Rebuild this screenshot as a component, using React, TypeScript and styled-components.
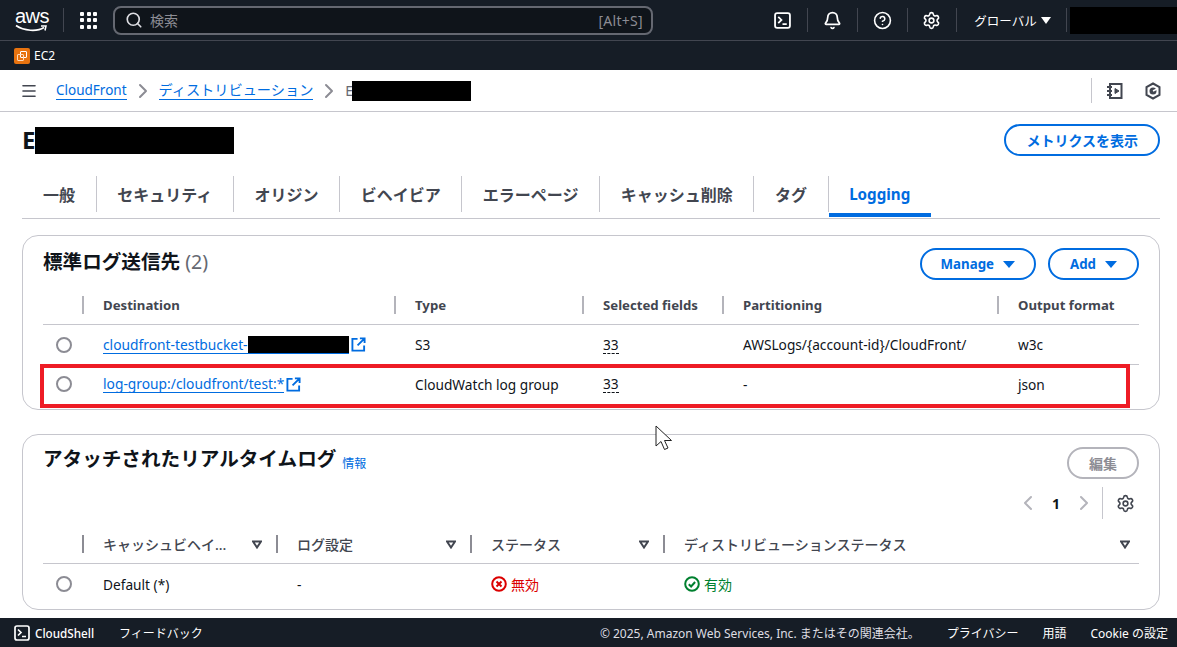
import React from 'react';
import styled, { createGlobalStyle } from 'styled-components';
import { Bell, ChevronLeft, ChevronRight, CircleHelp, Menu, Search, Settings } from 'lucide-react';

const GlobalStyle = createGlobalStyle`
    html, body {
        margin: 0;
        padding: 0;
        height: 647px;
        overflow: hidden;
        background: #fff;
        font-family: "Noto Sans", "Noto Sans CJK JP", sans-serif;
        font-size: 14px;
        color: #0f141a;
    }
    * { box-sizing: border-box; }
`;

const Page = styled.div`
    position: relative;
    width: 1177px;
    height: 647px;
    display: flex;
    flex-direction: column;
    overflow: hidden;
`;

const TopNav = styled.header`
    height: 41px;
    background: #161d26;
    border-bottom: 1px solid #424650;
    display: flex;
    align-items: center;
    padding-left: 15px;
    color: #fff;
    flex: none;
    overflow: hidden;
`;

const Logo = styled.div`
    width: 33px;
    height: 24px;
    margin-right: 15px;
    flex: none;
    font-family: "Liberation Sans", sans-serif;
    font-size: 20px;
    line-height: 17px;
    letter-spacing: -0.5px;
    text-align: center;
    svg { display: block; margin-top: -1px; }
`;

const NavDivider = styled.span`
    width: 1px;
    height: 24px;
    background: #424650;
    flex: none;
`;

const GridIcon = styled.div`
    width: 17px;
    height: 17px;
    margin: 0 16px 0 16px;
    flex: none;
    display: grid;
    grid-template-columns: repeat(3, 4px);
    grid-template-rows: repeat(3, 4px);
    gap: 2.5px;
    i { background: #fff; border-radius: 1px; }
`;

const SearchBox = styled.div`
    width: 540px;
    height: 29px;
    flex: none;
    border: 2px solid #656871;
    border-radius: 8px;
    background: #0f141a;
    display: flex;
    align-items: center;
    padding: 0 8px 0 10px;
    color: #8c8c94;
    font-size: 14px;
    span:first-of-type { margin-left: 7px; flex: 1; }
    span:last-of-type { letter-spacing: 0.3px; }
`;

const NavIconSlot = styled.div`
    width: 48.7px;
    height: 24px;
    display: flex;
    align-items: center;
    justify-content: center;
    flex: none;
`;

const NavIcons = styled.div`
    display: flex;
    align-items: center;
    margin-left: 105.500px;
    flex: none;
`;

const Region = styled.div`
    width: 109px;
    display: flex;
    align-items: center;
    padding-left: 17px;
    font-size: 12.5px;
    gap: 4px;
`;

const Caret = styled.span<{ $w?: number; $c?: string }>`
    width: 0;
    height: 0;
    border-left: ${p => (p.$w || 10) / 2}px solid transparent;
    border-right: ${p => (p.$w || 10) / 2}px solid transparent;
    border-top: 7px solid ${p => p.$c || '#fff'};
`;

const Redact = styled.span<{ $w: number; $h: number }>`
    display: inline-block;
    width: ${p => p.$w}px;
    height: ${p => p.$h}px;
    background: #000;
    flex: none;
`;

const AccountRedact = styled(Redact)`
    margin-left: 3px;
    margin-top: 1px;
`;

const ServiceBar = styled.div`
    height: 29px;
    background: #161d26;
    display: flex;
    align-items: center;
    padding-left: 14px;
    gap: 4px;
    font-size: 12px;
    color: #fff;
    flex: none;
`;

const Breadcrumbs = styled.nav`
    height: 42px;
    border-bottom: 1px solid #c6c6cd;
    display: flex;
    align-items: center;
    padding: 0 15px 0 20px;
    font-size: 14px;
    color: #656871;
    flex: none;
`;

const MenuSlot = styled.span`
    display: flex;
    margin-right: 18px;
    color: #424650;
`;

const Crumb = styled.a<{ $size: number }>`
    color: #006ce0;
    border-bottom: 1px solid #006ce0;
    font-size: ${p => p.$size}px;
    line-height: 18px;
`;

const CrumbSep = styled.span`
    display: flex;
    width: 32px;
    justify-content: center;
    color: #8c8c94;
`;

const CrumbTail = styled.span`
    display: flex;
    align-items: center;
    flex: 1;
`;

const CrumbId = styled(Redact)`
    margin-left: -1px;
`;

const ToolIcons = styled.div`
    display: flex;
    align-items: center;
    height: 25px;
    margin-left: 1px;
    border-left: 1px solid #c6c6cd;
    padding-left: 14px;
    gap: 20px;
`;

const Content = styled.main`
    flex: 1;
    padding: 11px 17px 0 22px;
    display: flex;
    flex-direction: column;
    min-height: 0;
`;

const TitleRow = styled.div`
    display: flex;
    align-items: center;
    justify-content: space-between;
    height: 34px;
    h1 {
        display: flex;
        align-items: center;
        margin: 0;
        font-size: 24px;
        font-weight: 700;
        line-height: 28px;
    }
`;

const PillButton = styled.button<{ $disabled?: boolean; $size?: number; $min?: number }>`
    height: 32px;
    min-width: ${p => p.$min || 0}px;
    padding: 0 ${p => (p.$size ? 19 : 20)}px;
    border-radius: 20px;
    border: 2px solid ${p => (p.$disabled ? '#b4b4bb' : '#006ce0')};
    color: ${p => (p.$disabled ? '#8c8c94' : '#006ce0')};
    background: #fff;
    font: 700 ${p => p.$size || 14}px "Noto Sans", "Noto Sans CJK JP", sans-serif;
    display: inline-flex;
    align-items: center;
    justify-content: center;
    gap: 9px;
    white-space: nowrap;
`;

const Tabs = styled.div`
    margin-top: 19px;
    height: 43px;
    display: flex;
    align-items: stretch;
    border-bottom: 1px solid #c6c6cd;
    padding-bottom: 1px;
    flex: none;
`;

const Tab = styled.div<{ $active?: boolean; $first?: boolean }>`
    position: relative;
    display: flex;
    align-items: center;
    padding: 0 20.6px;
    height: 36px;
    font-size: ${p => (p.$active ? 15.2 : 16)}px;
    font-weight: 700;
    color: ${p => (p.$active ? '#006ce0' : '#424650')};
    border-left: ${p => (p.$first ? '0' : '1px solid #c6c6cd')};
    ${p => p.$first && 'padding-left: 21px;'}
    ${p => p.$active && `
        &::after {
            content: '';
            position: absolute;
            left: 0;
            right: 0;
            bottom: -5px;
            height: 4px;
            background: #006ce0;
        }
    `}
`;

const Card = styled.section<{ $h: number; $mt: number }>`
    height: ${p => p.$h}px;
    margin-top: ${p => p.$mt}px;
    border: 1px solid #c6c6cd;
    border-radius: 16px;
    padding: 0 20px;
    flex: none;
    overflow: hidden;
`;

const CardHead = styled.div`
    display: flex;
    align-items: center;
    justify-content: space-between;
    height: 56px;
`;

const CardTitle = styled.h2`
    margin: -4px 0 0;
    font-size: 19.6px;
    font-weight: 700;
    line-height: 24px;
    small {
        font-size: 19.6px;
        font-weight: 400;
        color: #656871;
        margin-left: 5px;
    }
    a {
        font-size: 12px;
        font-weight: 400;
        color: #006ce0;
        margin-left: 6px;
        vertical-align: -2px;
    }
`;

const HeadButtons = styled.div`
    display: flex;
    gap: 12px;
`;

const GridRow = styled.div<{ $cols: string; $h: number }>`
    display: grid;
    grid-template-columns: ${p => p.$cols};
    height: ${p => p.$h}px;
    align-items: center;
    border-bottom: 1px solid #c6c6cd;
`;

const HeadRow = styled(GridRow)`
    padding-bottom: 6px;
`;

const LastRow = styled(GridRow)`
    border-bottom: 0;
`;

const HeadCell = styled.div`
    display: flex;
    align-items: center;
    justify-content: space-between;
    height: 18px;
    padding: 0 7px 0 19px;
    border-left: 2px solid #b4b4bb;
    font-weight: 700;
    color: #424650;
    font-size: 13.2px;
    white-space: nowrap;
`;

const SortHeadCell = styled(HeadCell)`
    font-weight: 500;
    font-size: 14px;
    border-left-color: #8c8c94;
    padding-right: 14px;
    &:last-child { padding-right: 9px; }
`;

const Cell = styled.div`
    display: flex;
    align-items: center;
    padding-left: 21px;
    font-size: 13.7px;
    white-space: nowrap;
`;

const RadioCell = styled.div`
    padding-left: 13px;
    display: flex;
`;

const Radio = styled.span`
    width: 16px;
    height: 16px;
    border: 2px solid #8c8c94;
    border-radius: 50%;
    background: #fff;
`;

const ExtLink = styled.a`
    display: inline-flex;
    align-items: center;
    color: #006ce0;
    border-bottom: 1px solid #006ce0;
    line-height: 17px;
    font-size: 13.8px;
`;

const Dotted = styled.span`
    border-bottom: 1px dashed #0f141a;
    line-height: 17px;
`;

const PagerRow = styled.div`
    display: flex;
    align-items: center;
    justify-content: flex-end;
    height: 32px;
    margin: -4px 0 12px;
    color: #b4b4bb;
    b { color: #0f141a; font-size: 14px; margin: 0 12px; font-weight: 700; }
`;

const PagerSettings = styled.div`
    display: flex;
    align-items: center;
    height: 32px;
    margin-left: 6px;
    padding: 0 4.500px 0 12.500px;
    border-left: 1px solid #c6c6cd;
    color: #424650;
`;

const Status = styled.span<{ $c: string }>`
    display: inline-flex;
    align-items: center;
    gap: 4px;
    font-size: 14px;
    color: ${p => p.$c};
`;

const Footer = styled.footer`
    height: 29px;
    background: #161d26;
    color: #fff;
    display: flex;
    align-items: center;
    padding: 0 9px 0 14px;
    font-size: 12px;
    flex: none;
    margin-top: auto;
    span.left { display: inline-flex; align-items: center; gap: 5px; margin-right: 25px; font-size: 11.7px; font-weight: 500; }
    span.copy { margin-left: auto; color: #dedee3; margin-right: 27px; }
    span.link { margin-right: 24px; }
    span.link:last-child { margin-right: 0; }
`;

const Highlight = styled.div`
    position: absolute;
    left: 40px;
    top: 364px;
    width: 1090px;
    height: 44px;
    border: 4px solid #ee1c25;
    pointer-events: none;
`;

const Cursor = styled.svg`
    position: absolute;
    left: 655px;
    top: 425px;
`;

const TerminalIcon = ({ size = 17, color = '#fff' }: { size?: number; color?: string }) => (
    <svg width={size} height={size} viewBox="0 0 16 16" fill="none" stroke={color} strokeWidth="1.7">
        <rect x="1" y="1" width="14" height="14" rx="2" />
        <path d="M4 4.500 7 7.500 4 10.500M8 11.500h4" />
    </svg>
);

const External = () => (
    <svg width="15" height="15" viewBox="0 0 16 16" fill="none" stroke="#006ce0" strokeWidth="2" style={{ marginLeft: 2 }}>
        <path d="M7 2H1.500v12.500H14V9M9.500 1.500H14.500V6.500M14 2 7 9" />
    </svg>
);

const SortIcon = () => (
    <svg width="10" height="9" viewBox="0 0 10 9" fill="none" stroke="#424650" strokeWidth="2">
        <path d="M1 1.500h8L5 7.500z" />
    </svg>
);

const destCols = '39px 312px 188px 140px 275px 1fr';
const rtCols = '39px 194px 194px 193px 1fr';

export default function App() {
    return (
        <Page>
            <GlobalStyle />
            <TopNav>
                <Logo>
                    aws
                    <svg width="33" height="9" viewBox="0 0 33 9" fill="none">
                        <path d="M1 1.500C9 7 22 8 29 3.500" stroke="#fff" strokeWidth="1.700" />
                        <path d="M26 2h5l-1 4.500" stroke="#fff" strokeWidth="1.500" />
                    </svg>
                </Logo>
                <NavDivider />
                <GridIcon>
                    {Array.from({ length: 9 }).map((_, i) => <i key={i} />)}
                </GridIcon>
                <SearchBox>
                    <Search size={18} color="#dedee3" strokeWidth={2.2} />
                    <span>検索</span>
                    <span>[Alt+S]</span>
                </SearchBox>
                <NavIcons>
                    <NavIconSlot><TerminalIcon /></NavIconSlot>
                    <NavDivider />
                    <NavIconSlot><Bell size={19} strokeWidth={2.2} /></NavIconSlot>
                    <NavDivider />
                    <NavIconSlot><CircleHelp size={19} strokeWidth={2} /></NavIconSlot>
                    <NavDivider />
                    <NavIconSlot><Settings size={19} strokeWidth={2} /></NavIconSlot>
                    <NavDivider />
                    <Region>グローバル <Caret /></Region>
                    <NavDivider />
                    <AccountRedact $w={107} $h={27} />
                </NavIcons>
            </TopNav>
            <ServiceBar>
                <svg width="16" height="16" viewBox="0 0 16 16" fill="none">
                    <rect width="16" height="16" rx="2" fill="#e8730f" />
                    <rect x="6.500" y="3.500" width="6" height="6" rx="0.500" stroke="#fff" strokeWidth="1" />
                    <rect x="3.500" y="6.500" width="6" height="6" rx="0.500" stroke="#ffd9b8" strokeWidth="1" />
                </svg>
                EC2
            </ServiceBar>
            <Breadcrumbs>
                <MenuSlot><Menu size={18} strokeWidth={2.2} /></MenuSlot>
                <Crumb $size={13.5}>CloudFront</Crumb>
                <CrumbSep><ChevronRight size={24} strokeWidth={2} /></CrumbSep>
                <Crumb $size={14.2}>ディストリビューション</Crumb>
                <CrumbSep><ChevronRight size={24} strokeWidth={2} /></CrumbSep>
                <CrumbTail>
                    <span>E</span>
                    <CrumbId $w={119} $h={20} />
                </CrumbTail>
                <ToolIcons>
                    <svg width="18" height="18" viewBox="0 0 18 18" fill="none" stroke="#424650" strokeWidth="2">
                        <path d="M4 2h11.500v14H4zM1 5h5M1 9h5M1 13h5" />
                        <path d="M9 6.500v5l4-2.500z" fill="#424650" strokeWidth="1" />
                    </svg>
                    <svg width="18" height="18" viewBox="0 0 18 18" fill="none" stroke="#424650" strokeWidth="2">
                        <path d="M9 1.500 15.500 5v8L9 16.500 2.500 13V5z" />
                        <circle cx="9" cy="9" r="3.500" fill="#424650" strokeWidth="0" />
                        <path d="M9 9l4-2" stroke="#fff" strokeWidth="1.500" />
                    </svg>
                </ToolIcons>
            </Breadcrumbs>
            <Content>
                <TitleRow>
                    <h1>
                        <span>E</span>
                        <Redact $w={199} $h={27} />
                    </h1>
                    <PillButton>メトリクスを表示</PillButton>
                </TitleRow>
                <Tabs>
                    <Tab $first>一般</Tab>
                    <Tab>セキュリティ</Tab>
                    <Tab>オリジン</Tab>
                    <Tab>ビヘイビア</Tab>
                    <Tab>エラーページ</Tab>
                    <Tab>キャッシュ削除</Tab>
                    <Tab>タグ</Tab>
                    <Tab $active>Logging</Tab>
                </Tabs>
                <Card $h={175} $mt={16}>
                    <CardHead>
                        <CardTitle>標準ログ送信先<small>(2)</small></CardTitle>
                        <HeadButtons>
                            <PillButton $size={13.3}>Manage <Caret $w={12} $c="#006ce0" /></PillButton>
                            <PillButton $size={13.3} $min={91}>Add <Caret $w={12} $c="#006ce0" /></PillButton>
                        </HeadButtons>
                    </CardHead>
                    <HeadRow $cols={destCols} $h={33}>
                        <div />
                        <HeadCell>Destination</HeadCell>
                        <HeadCell>Type</HeadCell>
                        <HeadCell>Selected fields</HeadCell>
                        <HeadCell>Partitioning</HeadCell>
                        <HeadCell>Output format</HeadCell>
                    </HeadRow>
                    <GridRow $cols={destCols} $h={40}>
                        <RadioCell><Radio /></RadioCell>
                        <Cell>
                            <ExtLink>cloudfront-testbucket-<Redact $w={101} $h={17} /></ExtLink>
                            <External />
                        </Cell>
                        <Cell>S3</Cell>
                        <Cell><Dotted>33</Dotted></Cell>
                        <Cell>AWSLogs/{'{account-id}'}/CloudFront/</Cell>
                        <Cell>w3c</Cell>
                    </GridRow>
                    <LastRow $cols={destCols} $h={38}>
                        <RadioCell><Radio /></RadioCell>
                        <Cell>
                            <ExtLink>log-group:/cloudfront/test:*</ExtLink>
                            <External />
                        </Cell>
                        <Cell>CloudWatch log group</Cell>
                        <Cell><Dotted>33</Dotted></Cell>
                        <Cell>-</Cell>
                        <Cell>json</Cell>
                    </LastRow>
                </Card>
                <Card $h={176} $mt={24}>
                    <CardHead>
                        <CardTitle>アタッチされたリアルタイムログ<a>情報</a></CardTitle>
                        <PillButton $disabled>編集</PillButton>
                    </CardHead>
                    <PagerRow>
                        <ChevronLeft size={24} strokeWidth={2} />
                        <b>1</b>
                        <ChevronRight size={24} strokeWidth={2} />
                        <PagerSettings><Settings size={19} strokeWidth={2} /></PagerSettings>
                    </PagerRow>
                    <HeadRow $cols={rtCols} $h={33}>
                        <div />
                        <SortHeadCell>キャッシュビヘイ...<SortIcon /></SortHeadCell>
                        <SortHeadCell>ログ設定<SortIcon /></SortHeadCell>
                        <SortHeadCell>ステータス<SortIcon /></SortHeadCell>
                        <SortHeadCell>ディストリビューションステータス<SortIcon /></SortHeadCell>
                    </HeadRow>
                    <LastRow $cols={rtCols} $h={40}>
                        <RadioCell><Radio /></RadioCell>
                        <Cell>Default (*)</Cell>
                        <Cell>-</Cell>
                        <Cell>
                            <Status $c="#db0000">
                                <svg width="16" height="16" viewBox="0 0 16 16" fill="none" stroke="#db0000" strokeWidth="2">
                                    <circle cx="8" cy="8" r="6.800" />
                                    <path d="M5.500 5.500l5 5M10.500 5.500l-5 5" />
                                </svg>
                                無効
                            </Status>
                        </Cell>
                        <Cell>
                            <Status $c="#00802f">
                                <svg width="16" height="16" viewBox="0 0 16 16" fill="none" stroke="#00802f" strokeWidth="2">
                                    <circle cx="8" cy="8" r="6.800" />
                                    <path d="M4.800 8.200l2.300 2.300 4-4.500" />
                                </svg>
                                有効
                            </Status>
                        </Cell>
                    </LastRow>
                </Card>
            </Content>
            <Footer>
                <span className="left"><TerminalIcon size={16} />CloudShell</span>
                <span>フィードバック</span>
                <span className="copy">© 2025, Amazon Web Services, Inc. またはその関連会社。</span>
                <span className="link">プライバシー</span>
                <span className="link">用語</span>
                <span className="link">Cookie の設定</span>
            </Footer>
            <Highlight />
            <Cursor width="19" height="28" viewBox="0 0 19 28" fill="#fff" stroke="#222" strokeWidth="1">
                <path d="M1 1v20l5-4.500 3.500 8 3.500-1.500-3.500-7.500h7z" />
            </Cursor>
        </Page>
    );
}
